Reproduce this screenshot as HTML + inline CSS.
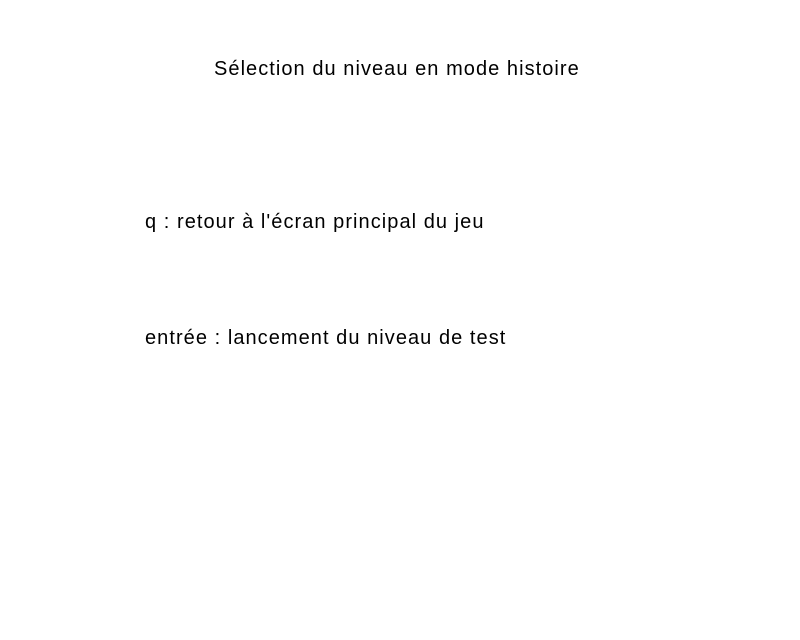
<!DOCTYPE html>
<html><head><meta charset="utf-8"><style>
html,body{margin:0;padding:0;background:#fff;width:800px;height:640px;overflow:hidden}
div{position:absolute;font-family:"Liberation Sans",sans-serif;font-size:20px;color:#000;white-space:nowrap;line-height:24px;letter-spacing:1.05px}
</style></head><body>
<div style="left:214px;top:57px">Sélection du niveau en mode histoire</div>
<div style="left:145px;top:210px">q : retour à l'écran principal du jeu</div>
<div style="left:145px;top:326px">entrée : lancement du niveau de test</div>
</body></html>
